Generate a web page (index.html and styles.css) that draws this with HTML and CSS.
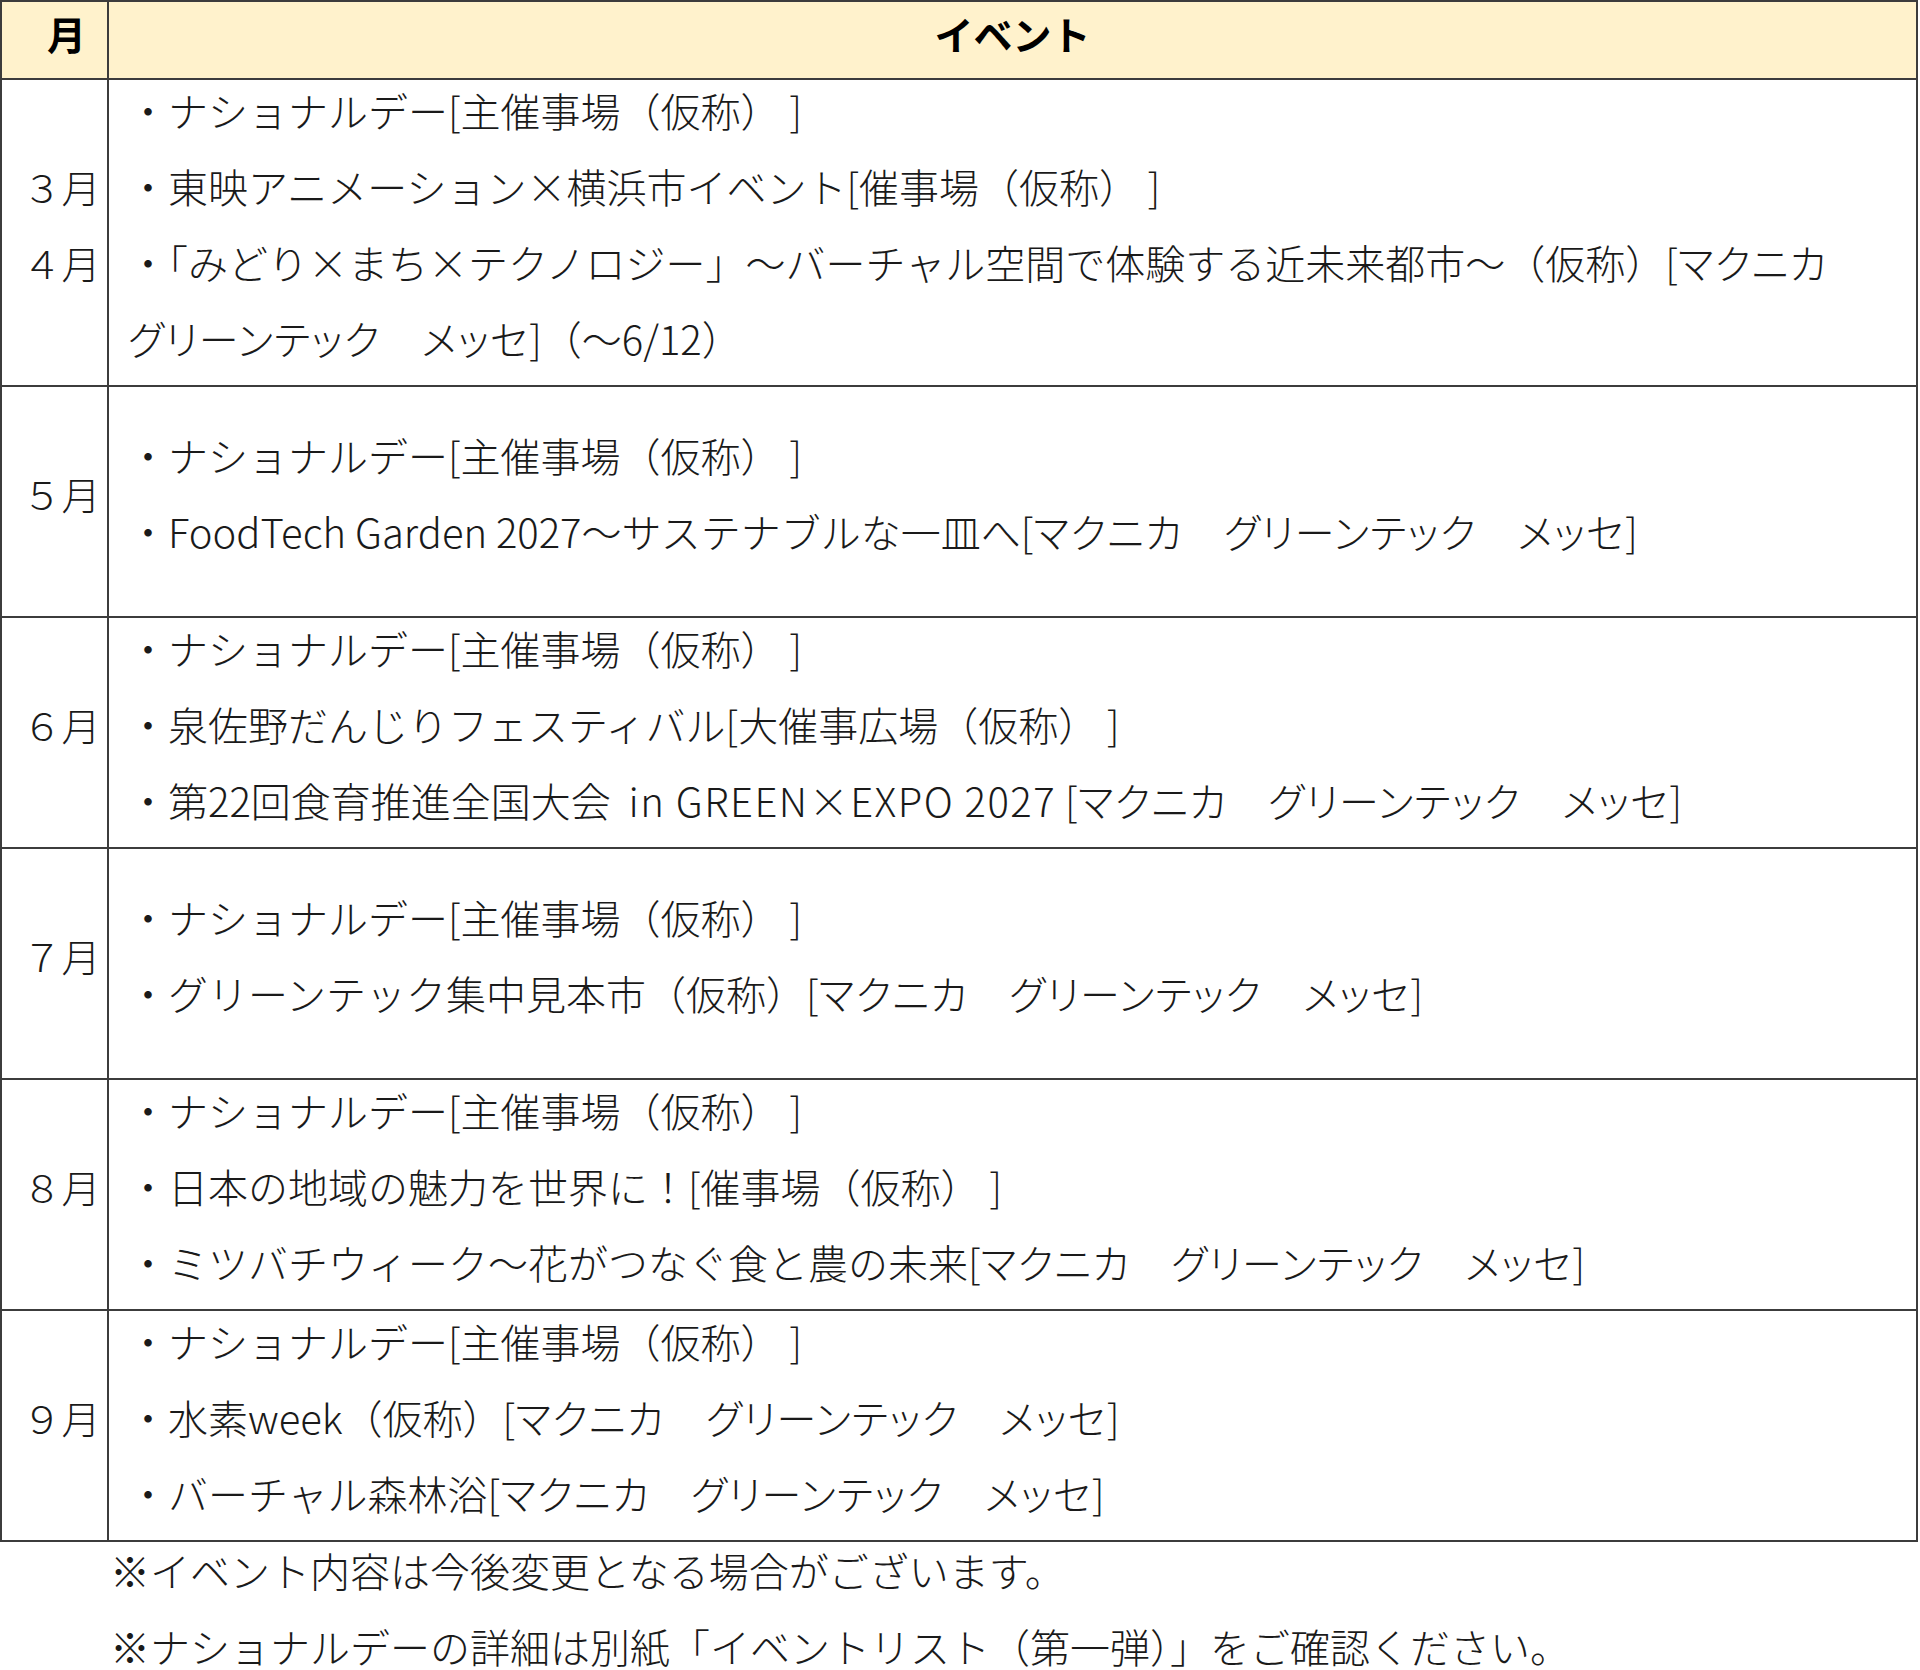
FILE: index.html
```html
<!DOCTYPE html>
<html lang="ja">
<head>
<meta charset="utf-8">
<title>イベント</title>
<link rel="stylesheet" href="styles.css">
</head>
<body>
<div class="sched">
  <div class="cell head mcol">月</div>
  <div class="cell head ecol">イベント</div>

  <div class="cell month tall">３月<br>４月</div>
  <div class="cell events tall">
    <div class="ev">・ナショナルデー[主催事場（仮称） ]</div>
    <div class="ev">・東映アニメーション×横浜市イベント[催事場（仮称） ]</div>
    <div class="ev">・「みどり×まち×テクノロジー」～バーチャル空間で体験する近未来都市～（仮称）[<span class="venue">マクニカ</span><br><span class="venue">グリーンテック　メッセ</span>]（～6/12）</div>
  </div>

  <div class="cell month">５月</div>
  <div class="cell events">
    <div class="ev">・ナショナルデー[主催事場（仮称） ]</div>
    <div class="ev">・FoodTech Garden 2027～サステナブルな一皿へ[<span class="venue">マクニカ　グリーンテック　メッセ</span>]</div>
  </div>

  <div class="cell month">６月</div>
  <div class="cell events">
    <div class="ev">・ナショナルデー[主催事場（仮称） ]</div>
    <div class="ev">・泉佐野だんじりフェスティバル[大催事広場（仮称） ]</div>
    <div class="ev">・第22回食育推進全国大会 &nbsp;<span class="latin">in GREEN×EXPO 2027</span> [<span class="venue">マクニカ　グリーンテック　メッセ</span>]</div>
  </div>

  <div class="cell month">７月</div>
  <div class="cell events">
    <div class="ev">・ナショナルデー[主催事場（仮称） ]</div>
    <div class="ev">・グリーンテック集中見本市（仮称）[<span class="venue">マクニカ　グリーンテック　メッセ</span>]</div>
  </div>

  <div class="cell month">８月</div>
  <div class="cell events">
    <div class="ev">・ナショナルデー[主催事場（仮称） ]</div>
    <div class="ev">・日本の地域の魅力を世界に！[催事場（仮称） ]</div>
    <div class="ev">・ミツバチウィーク～花がつなぐ食と農の未来[<span class="venue">マクニカ　グリーンテック　メッセ</span>]</div>
  </div>

  <div class="cell month">９月</div>
  <div class="cell events">
    <div class="ev">・ナショナルデー[主催事場（仮称） ]</div>
    <div class="ev">・水素week（仮称）[<span class="venue">マクニカ　グリーンテック　メッセ</span>]</div>
    <div class="ev">・バーチャル森林浴[<span class="venue">マクニカ　グリーンテック　メッセ</span>]</div>
  </div>
</div>

<div class="notes">
  <p>※イベント内容は今後変更となる場合がございます。</p>
  <p>※ナショナルデーの詳細は別紙「イベントリスト（第一弾）」をご確認ください。</p>
</div>
</body>
</html>
```

FILE: styles.css
```css
html, body {
  margin: 0;
  padding: 0;
  background: #ffffff;
}

body {
  width: 1920px;
  font-family: "Noto Sans CJK JP Light", "Noto Sans CJK JP DemiLight", "Noto Sans CJK JP", "Noto Sans", sans-serif;
  font-weight: 300;
  color: #1a1a1a;
}

.sched {
  width: 1918px;
  display: grid;
  grid-template-columns: 107px 1fr;
  border-top: 2px solid #3c3c3c;
  border-left: 2px solid #3c3c3c;
  box-sizing: border-box;
}

.cell {
  border-right: 2px solid #3c3c3c;
  border-bottom: 2px solid #3c3c3c;
  box-sizing: border-box;
}

.head {
  height: 78px;
  background: #fff2cc;
  display: flex;
  align-items: center;
  justify-content: center;
  font-family: "Noto Sans CJK JP", "Noto Sans", sans-serif;
  font-weight: 700;
  font-size: 39px;
  color: #000000;
  padding-bottom: 14px;
}

.head.mcol {
  padding-left: 24px;
}

.month {
  display: flex;
  align-items: center;
  justify-content: center;
  text-align: center;
  font-size: 39px;
  line-height: 76px;
  min-height: 231px;
  padding-left: 14px;
  padding-bottom: 18px;
}

.events {
  display: flex;
  flex-direction: column;
  justify-content: center;
  min-height: 231px;
  padding: 1px 0 0 19px;
  font-size: 40px;
  line-height: 76px;
}

.tall {
  min-height: 307px;
}

.ev {
  white-space: nowrap;
}

.ev:first-child {
  margin-top: -18px;
}

.venue {
  font-feature-settings: "palt";
  letter-spacing: 1px;
}

.latin {
  letter-spacing: 1.5px;
}

.notes {
  margin-top: -10px;
  padding-left: 110px;
  font-size: 40px;
  line-height: 76px;
}

.notes p {
  margin: 0;
  white-space: nowrap;
}
```
